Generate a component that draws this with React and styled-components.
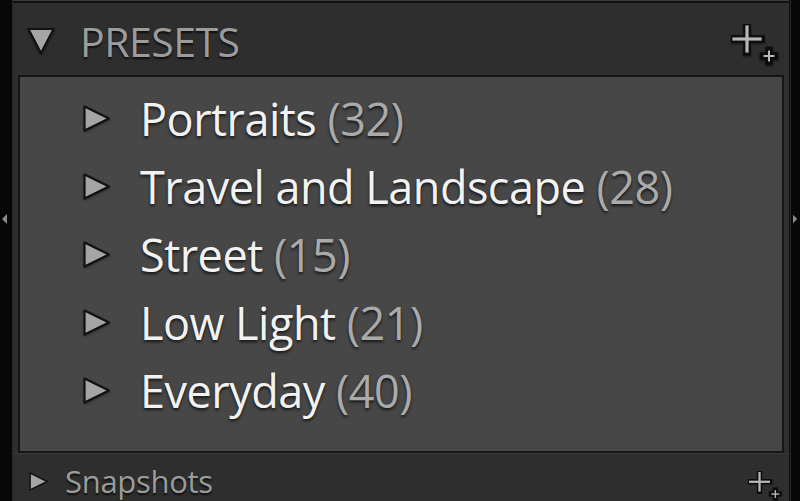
import React from "react";
import styled, { createGlobalStyle } from "styled-components";

const GlobalStyle = createGlobalStyle`
  html, body {
    margin: 0;
    padding: 0;
    background: #070707;
  }
`;

const presets = [
  { name: "Portraits", count: 32 },
  { name: "Travel and Landscape", count: 28 },
  { name: "Street", count: 15 },
  { name: "Low Light", count: 21 },
  { name: "Everyday", count: 40 },
];

function Triangle({ dir = "right", size = 26 }) {
  const points = dir === "down" ? "1.5,2 26.5,2 14,26" : "1.5,1.5 25,13 1.5,24.5";
  const box = dir === "down" ? 28 : 26;
  return (
    <svg width={size} height={size} viewBox={`0 0 ${box} ${box}`}>
      <polygon
        points={points}
        fill="#a5a5a5"
        stroke="#111"
        strokeWidth="2"
        strokeLinejoin="round"
      />
    </svg>
  );
}

function PlusIcon({ scale = 1 }) {
  return (
    <svg width={48 * scale} height={44 * scale} viewBox="0 0 48 44">
      <g stroke="#0c0c0c" strokeWidth="7.5" strokeLinecap="square">
        <line x1="16" y1="2" x2="16" y2="28" />
        <line x1="2" y1="15" x2="30" y2="15" />
        <line x1="38" y1="26.5" x2="38" y2="37.5" />
        <line x1="32.5" y1="32" x2="43.5" y2="32" />
      </g>
      <g stroke="#b6b6b6" strokeWidth="3.2" strokeLinecap="square">
        <line x1="16" y1="3" x2="16" y2="27" />
        <line x1="3" y1="15" x2="29" y2="15" />
      </g>
      <g stroke="#b6b6b6" strokeWidth="2" strokeLinecap="square">
        <line x1="38" y1="27.5" x2="38" y2="36.5" />
        <line x1="33.5" y1="32" x2="42.5" y2="32" />
      </g>
    </svg>
  );
}

function SideArrow({ dir }) {
  const points = dir === "left" ? "5,0 5,10 0,5" : "0,0 0,10 5,5";
  return (
    <svg width="6" height="10" viewBox="0 0 6 10">
      <polygon points={points} fill="#8a8a8a" />
    </svg>
  );
}

export default function App() {
  return (
    <>
      <GlobalStyle />
      <Frame>
        <Side $left>
          <SideArrow dir="left" />
        </Side>
        <Panel>
          <TopStrip />
          <Header>
            <HeaderArrow>
              <Triangle dir="down" size={28} />
            </HeaderArrow>
            <HeaderTitle>PRESETS</HeaderTitle>
            <HeaderPlus>
              <PlusIcon />
            </HeaderPlus>
          </Header>
          <ListBox>
            {presets.map((p) => (
              <Row key={p.name}>
                <Triangle size={27} />
                <ItemName>
                  {p.name} <Count>({p.count})</Count>
                </ItemName>
              </Row>
            ))}
          </ListBox>
          <Footer>
            <FooterArrow>
              <Triangle size={19} />
            </FooterArrow>
            <FooterTitle>Snapshots</FooterTitle>
            <FooterPlus>
              <PlusIcon scale={0.72} />
            </FooterPlus>
          </Footer>
        </Panel>
        <Side>
          <SideArrow dir="right" />
        </Side>
      </Frame>
    </>
  );
}

/* ===== styled-components ===== */
const Frame = styled.div`
  display: flex;
  width: 800px;
  height: 501px;
  overflow: hidden;
  background: #070707;
  font-family: "Open Sans", "Noto Sans", sans-serif;
`;

const Side = styled.div`
  flex: none;
  width: ${(p) => (p.$left ? "13px" : "10px")};
  display: flex;
  align-items: center;
  justify-content: ${(p) => (p.$left ? "flex-start" : "flex-end")};
  padding: 0 2px 64px;
  box-sizing: border-box;
  border-${(p) => (p.$left ? "right" : "left")}: 1px solid #262626;
`;

const Panel = styled.div`
  flex: 1;
  display: flex;
  flex-direction: column;
  background: #2e2e2e;
  border-right: 1px solid #101010;
`;

const TopStrip = styled.div`
  flex: none;
  height: 1px;
  background: #3a3a3a;
  border-bottom: 2px solid #121212;
`;

const Header = styled.div`
  flex: none;
  height: 72px;
  display: flex;
  align-items: flex-start;
  padding-left: 14px;

  svg {
    filter: drop-shadow(0 1px 1px rgba(0, 0, 0, 0.6));
  }
`;

const HeaderArrow = styled.div`
  margin-top: 24px;
  display: flex;
`;

const HeaderTitle = styled.div`
  margin: 18px 0 0 25px;
  font-size: 41px;
  color: #9c9c9c;
  letter-spacing: -0.5px;
  text-shadow: 0 2px 2px rgba(0, 0, 0, 0.7);
  line-height: 1;
`;

const HeaderPlus = styled.div`
  margin: 21px 10px 0 auto;
  display: flex;
`;

const ListBox = styled.div`
  flex: none;
  margin: 0 5px;
  height: 378px;
  box-sizing: border-box;
  background: #474747;
  border: 2px solid #161616;
  padding: 7px 0 0 63px;
  display: flex;
  flex-direction: column;
`;

const Row = styled.div`
  flex: none;
  height: 68px;
  display: flex;
  align-items: center;
  gap: 30px;

  svg {
    flex: none;
    filter: drop-shadow(0 1px 1px rgba(0, 0, 0, 0.4));
  }
`;

const ItemName = styled.div`
  font-size: 45px;
  color: #f2f2f2;
  line-height: 1;
  white-space: nowrap;
  letter-spacing: -0.5px;
  text-shadow: 0 2px 3px rgba(0, 0, 0, 0.7);
`;

const Count = styled.span`
  color: #aaaaaa;
`;

const Footer = styled.div`
  flex: 1;
  display: flex;
  align-items: flex-start;
  padding-left: 16px;
  border-top: 1px solid #3a3a3a;
`;

const FooterArrow = styled.div`
  margin-top: 18px;
  display: flex;
`;

const FooterTitle = styled.div`
  margin: 12px 0 0 17px;
  font-size: 31px;
  color: #9c9c9c;
  line-height: 1;
  letter-spacing: -0.3px;
  text-shadow: 0 2px 2px rgba(0, 0, 0, 0.7);
`;

const FooterPlus = styled.div`
  margin: 17px 6px 0 auto;
  display: flex;
`;
